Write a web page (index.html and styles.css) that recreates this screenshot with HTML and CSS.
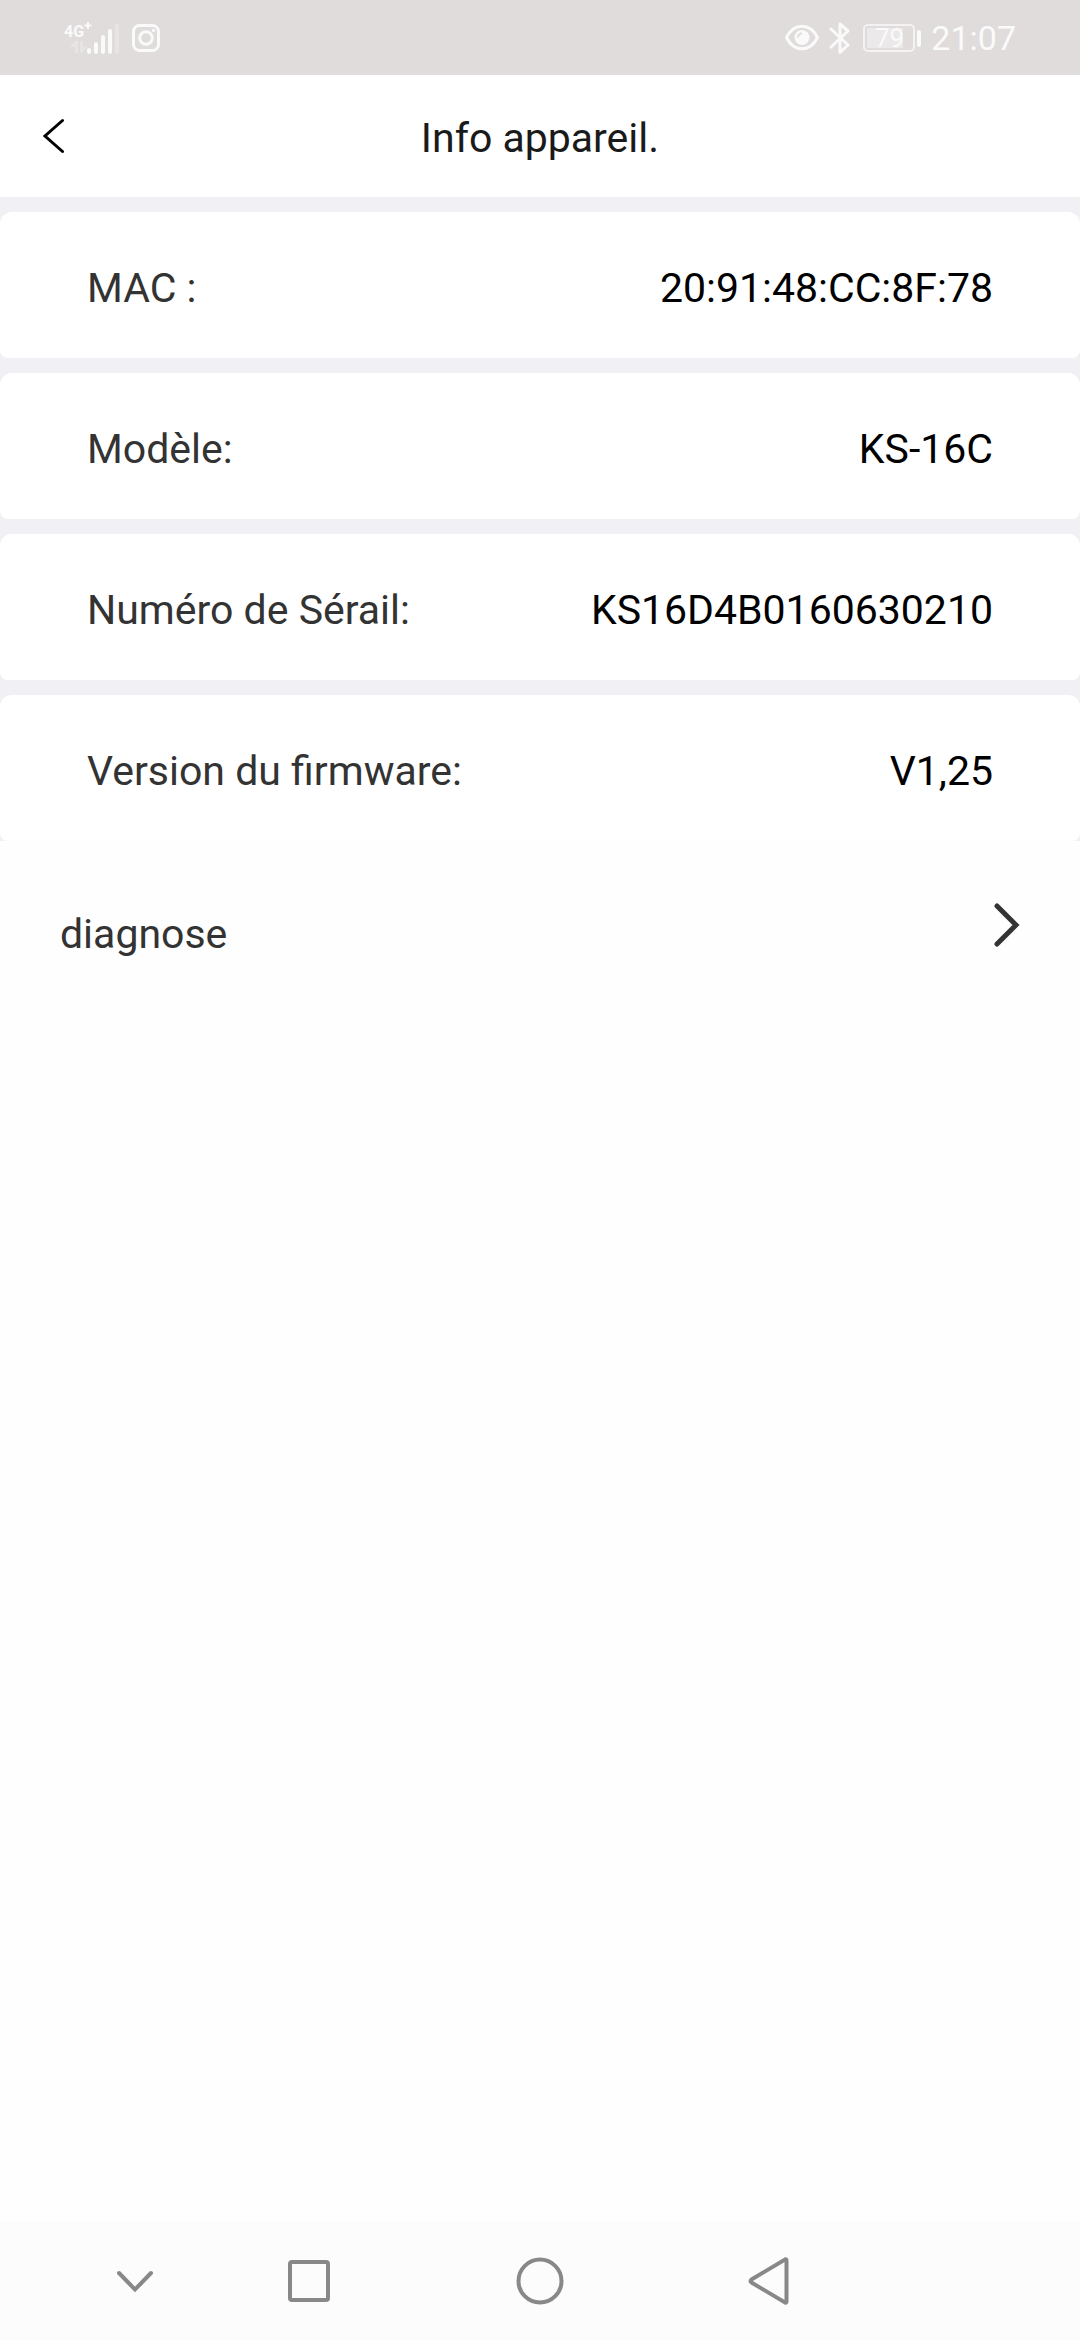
FILE: index.html
```html
<!DOCTYPE html>
<html lang="fr">
<head>
    <meta charset="UTF-8">
    <meta name="viewport" content="width=device-width, initial-scale=1.0">
    <title>Info appareil.</title>
    <link rel="stylesheet" href="styles.css">
</head>
<body>

    <div class="status-bar">
        <div class="status-group">
            <svg class="network" width="58" height="36" viewBox="0 0 58 36">
                <text x="0" y="17" class="network-type">4G</text>
                <path d="M24 2v7M20.500 5.500h7" class="plus"/>
                <g class="faint">
                    <path d="M6 27l5-6h3v12h-3v-6zM16 21h3v6h4l-5 6h-2z"/>
                    <rect x="51" y="4" width="4" height="30" rx="2"/>
                </g>
                <rect x="23" y="28" width="4" height="6" rx="2"/>
                <rect x="30" y="22" width="4" height="12" rx="2"/>
                <rect x="37" y="15" width="4" height="19" rx="2"/>
                <rect x="44" y="9" width="4" height="25" rx="2"/>
            </svg>
            <svg width="28" height="28" viewBox="0 0 28 28">
                <rect x="1.500" y="1.500" width="25" height="25" rx="6" class="line"/>
                <circle cx="14" cy="14" r="6.300" class="line"/>
                <circle cx="21.500" cy="6.500" r="1.700"/>
            </svg>
        </div>
        <div class="status-group">
            <svg width="34" height="28" viewBox="0 0 34 28">
                <path d="M1.500 13.500C5 6.500 10.500 2.200 17 2.200S29 6.500 32.500 13.500C29 20.500 23.500 24.800 17 24.800S5 20.500 1.500 13.500z" class="line"/>
                <circle cx="17" cy="13.500" r="7.500"/>
                <path d="M13 13.500a4 4 0 0 1 4-4" class="eye-glint"/>
            </svg>
            <svg width="23" height="34" viewBox="0 0 23 34">
                <path d="M2 8l17 16-8 7.500V3l8 7L2 26" class="line"/>
            </svg>
            <svg width="59" height="30" viewBox="0 0 59 30">
                <rect x="2" y="2" width="50" height="26" rx="4" class="battery-case"/>
                <rect x="5" y="5" width="36" height="20" class="battery-level"/>
                <rect x="55" y="7" width="4" height="17" rx="2"/>
                <text x="13" y="24" class="battery-text">79</text>
            </svg>
            <span class="time">21:07</span>
        </div>
    </div>

    <header class="title-bar">
        <button class="back" type="button" aria-label="Retour">
            <svg width="22" height="36" viewBox="0 0 22 36">
                <path d="M19.500 2.500L2 18l17.500 15.500"/>
            </svg>
        </button>
        <h1>Info appareil.</h1>
    </header>

    <main>
        <dl class="info-list">
            <div class="info-row">
                <dt>MAC :</dt>
                <dd>20:91:48:CC:8F:78</dd>
            </div>
            <div class="info-row">
                <dt>Modèle:</dt>
                <dd>KS-16C</dd>
            </div>
            <div class="info-row">
                <dt>Numéro de Sérail:</dt>
                <dd>KS16D4B0160630210</dd>
            </div>
            <div class="info-row">
                <dt>Version du firmware:</dt>
                <dd>V1,25</dd>
            </div>
        </dl>

        <a class="diagnose" href="#">
            <span>diagnose</span>
            <svg width="26" height="44" viewBox="0 0 26 44">
                <path d="M3 3l19 19L3 41"/>
            </svg>
        </a>
    </main>

    <nav class="nav-bar">
        <button type="button" aria-label="Masquer">
            <svg width="36" height="48" viewBox="0 0 36 48">
                <path d="M2 16l16 16.500L34 16"/>
            </svg>
        </button>
        <button type="button" aria-label="Applications">
            <svg width="48" height="48" viewBox="0 0 48 48">
                <rect x="5" y="5" width="38" height="38" rx="2"/>
            </svg>
        </button>
        <button type="button" aria-label="Accueil">
            <svg width="48" height="48" viewBox="0 0 48 48">
                <circle cx="24" cy="24" r="21.500"/>
            </svg>
        </button>
        <button type="button" aria-label="Précédent">
            <svg width="42" height="48" viewBox="0 0 42 48">
                <path d="M39.500 3.500v41q0 1.500-1.500 1L4.500 25.500q-2-1.500 0-3L38 2.500q1.500-.500 1.500 1z"/>
            </svg>
        </button>
    </nav>

</body>
</html>
```

FILE: styles.css
```css
* {
    box-sizing: border-box;
}

body {
    display: flex;
    flex-direction: column;
    min-height: 100vh;
    margin: 0;
    background-color: #fefefe;
    color: #333;
    font-family: Roboto, "Noto Sans", sans-serif;
    font-size: 41px;
    line-height: 48px;
}

button {
    display: flex;
    align-items: center;
    justify-content: center;
    padding: 0;
    border: none;
    background: none;
    cursor: pointer;
}

svg {
    display: block;
    flex: none;
}

/* Status bar */
.status-bar {
    display: flex;
    align-items: center;
    justify-content: space-between;
    height: 75px;
    padding: 0 64px;
    background-color: #e0dcdb;
    color: #fafafa;
}

.status-bar svg {
    fill: #fafafa;
}

.status-group {
    display: flex;
    align-items: center;
    gap: 10px;
}

.status-bar .line {
    fill: none;
    stroke: #fafafa;
    stroke-width: 3;
    stroke-linejoin: round;
    stroke-linecap: round;
}

.network-type {
    font-size: 16px;
    font-weight: bold;
}

.plus {
    stroke: #fafafa;
    stroke-width: 2;
}

.faint {
    opacity: 0.3;
}

.eye-glint {
    fill: none;
    stroke: #e0dcdb;
    stroke-width: 2;
}

.status-bar .battery-case {
    fill: none;
    stroke: #f4f2f2;
    stroke-width: 2;
}

.status-bar .battery-level {
    fill: #ebe9e9;
}

.battery-text {
    font-size: 26px;
}

.time {
    font-size: 34px;
}

/* Title bar */
.title-bar {
    display: grid;
    grid-template-columns: 1fr auto 1fr;
    align-items: center;
    height: 122px;
    padding: 0 43px;
    background-color: #fff;
}

.title-bar h1 {
    margin: 0;
    padding-top: 4px;
    color: #1a1a1a;
    font-size: 41px;
    font-weight: normal;
}

.back {
    justify-self: start;
}

.back path {
    fill: none;
    stroke: #000;
    stroke-width: 3;
    stroke-linecap: round;
}

/* Device info */
main {
    flex: 1;
}

.info-list {
    display: flex;
    flex-direction: column;
    gap: 15px;
    margin: 0;
    padding-top: 15px;
    background-color: #f1f0f5;
}

.info-row {
    display: flex;
    justify-content: space-between;
    padding: 52px 87px 46px;
    border-radius: 12px 12px 8px 8px;
    background-color: #fff;
}

.info-row dd {
    margin: 0;
    color: #000;
}

.diagnose {
    display: flex;
    align-items: flex-start;
    justify-content: space-between;
    padding: 62px 60px;
    color: #333;
    text-decoration: none;
}

.diagnose span {
    padding-top: 7px;
}

.diagnose path {
    fill: none;
    stroke: #333;
    stroke-width: 5;
    stroke-linecap: round;
}

/* Navigation bar */
.nav-bar {
    display: grid;
    grid-template-columns: 25fr 33fr 44fr 32fr 36fr;
    height: 118px;
    padding-left: 60px;
    background-color: #fcfcfc;
}

.nav-bar svg {
    fill: none;
    stroke: #888;
    stroke-width: 4;
    stroke-linecap: round;
}
```
